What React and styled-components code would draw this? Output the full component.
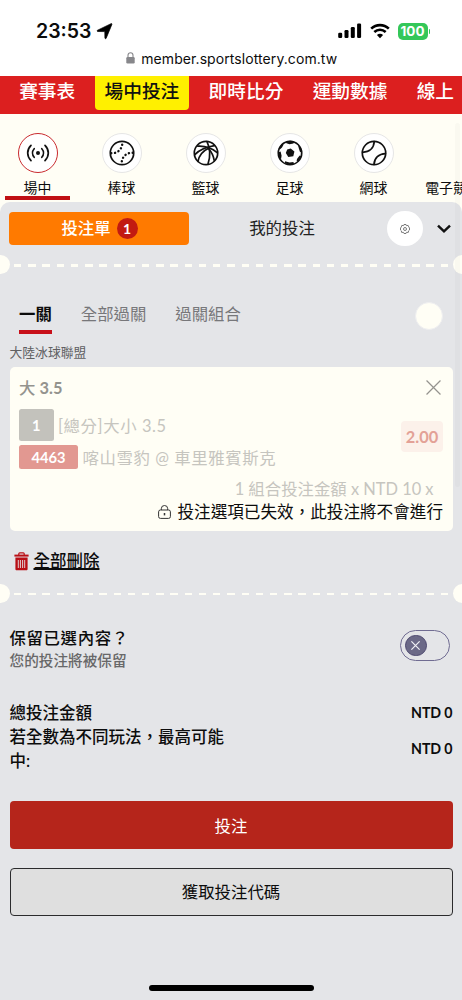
import React from 'react'
import styled, { createGlobalStyle } from 'styled-components'

const GlobalStyle = createGlobalStyle`
  * {
    box-sizing: border-box;
  }

  body {
    margin: 0;
    background-color: #fff;
    color: #0c0c0c;
    font-family: Lato, 'Noto Sans CJK TC', sans-serif;
    font-size: 16.4px;
  }

  button {
    padding: 0;
    border: none;
    background: none;
    color: inherit;
    font: inherit;
  }

  svg {
    display: block;
    flex-shrink: 0;
  }
`

const Screen = styled.div`
  position: relative;
  width: 462px;
  height: 1000px;
  overflow: hidden;
  background-color: #fffef5;
`

const BrowserBar = styled.header`
  height: 76px;
  padding-top: 20px;
  background-color: #fff;
  font-family: Inter, sans-serif;
`

const StatusRow = styled.div`
  display: flex;
  align-items: center;
  height: 22px;
  padding: 0 32px 0 36px;
`

const Time = styled.span`
  margin-right: 5px;
  font-size: 19.5px;
  font-weight: 600;
  letter-spacing: 0;
`

const StatusIcons = styled.div`
  display: flex;
  align-items: center;
  gap: 8px;
  margin-left: auto;
`

const BatteryBox = styled.div`
  display: flex;
  align-items: center;
  gap: 1px;
`

const Battery = styled.div`
  width: 30px;
  height: 17px;
  border-radius: 5px;
  background-color: #34c759;
  color: #fff;
  font-size: 13.5px;
  font-weight: 700;
  line-height: 17px;
  text-align: center;
`

const BatteryTip = styled.div`
  width: 1.5px;
  height: 5px;
  border-radius: 0 2px 2px 0;
  background-color: #34c759;
`

const UrlRow = styled.div`
  display: flex;
  justify-content: center;
  align-items: center;
  gap: 6.5px;
  height: 20px;
  margin-top: 6px;
  padding-left: 1px;
  font-size: 14px;
  letter-spacing: 0.08px;
`

const Nav = styled.nav`
  display: flex;
  gap: 9.3px;
  height: 38px;
  padding-left: 9.2px;
  overflow: hidden;
  background-color: #dc1f1f;
`

const NavItem = styled.div`
  flex-shrink: 0;
  height: 34px;
  padding: 0 10px;
  border-radius: 0 0 4px 4px;
  background-color: ${(props) => props.$active && '#fff000'};
  color: ${(props) => (props.$active ? '#111' : '#fff')};
  font-size: 18.7px;
  font-weight: 500;
  line-height: 31px;
  white-space: nowrap;
`

const Sports = styled.div`
  display: flex;
  gap: 19px;
  height: 88px;
  padding: 19px 0 0 5px;
  overflow: hidden;
`

const SportItem = styled.div`
  display: flex;
  flex-direction: column;
  flex-shrink: 0;
  align-items: center;
  width: 65px;
  height: 67px;
  border-bottom: ${(props) => props.$active && '4px solid #c01014'};
  font-size: 13.9px;
  white-space: nowrap;
`

const SportCircle = styled.div`
  display: flex;
  flex-shrink: 0;
  justify-content: center;
  align-items: center;
  width: 40px;
  height: 40px;
  border: 1px solid ${(props) => (props.$active ? '#c92a2e' : '#e6e6e6')};
  border-radius: 50%;
  background-color: ${(props) => !props.$empty && '#fff'};
  visibility: ${(props) => props.$empty && 'hidden'};
`

const SportLabel = styled.span`
  margin-top: 5px;
  margin-left: ${(props) => props.$shift && '-9px'};
  line-height: 20px;
`

const Panel = styled.main`
  height: 798px;
  border-radius: 10px 10px 0 0;
  background-color: #e4e5e8;
`

const SlipHeader = styled.div`
  display: flex;
  align-items: center;
  height: 53px;
  padding: 0 11px 0 9px;
`

const SlipButton = styled.button`
  display: flex;
  justify-content: center;
  align-items: center;
  gap: 6px;
  width: 180px;
  height: 33px;
  padding-left: 1px;
  border-radius: 4px;
  background-color: #ff7a00;
  color: #fff;
  line-height: 30px;
`

const SlipText = styled.span`
  margin-top: -2px;
  font-weight: 500;
`

const Count = styled.span`
  width: 21px;
  height: 21px;
  border-radius: 50%;
  background-color: #c21a11;
  font-size: 14px;
  font-weight: 700;
  line-height: 21px;
  text-align: center;
`

const MyBets = styled.button`
  width: 186px;
  margin-top: -3px;
  color: #222;
`

const GearButton = styled.button`
  display: flex;
  justify-content: center;
  align-items: center;
  width: 35.5px;
  height: 35.5px;
  margin: 0 14px 0 12px;
  border-radius: 50%;
  background-color: #fff;
`

const Perforation = styled.div`
  display: flex;
  justify-content: space-between;
  align-items: center;
  height: 19px;
  margin: 0 -9.5px;
`

const Notch = styled.div`
  width: 19px;
  height: 19px;
  border-radius: 50%;
  background-color: #fffef5;
`

const Dashes = styled.div`
  width: 435px;
  height: 2.5px;
  margin-top: 1.5px;
  background: repeating-linear-gradient(
    90deg,
    #fffef5 0 7.4px,
    transparent 7.4px 14.22px
  );
`

const Tabs = styled.div`
  display: flex;
  align-items: center;
  gap: 29px;
  height: 34px;
  margin-top: 24.5px;
  padding: 0 19px;
`

const Tab = styled.button`
  height: 36px;
  border-bottom: 4px solid ${(props) => (props.$active ? '#c8101a' : 'transparent')};
  color: ${(props) => (props.$active ? '#0c0c0c' : '#77777a')};
  font-size: 16.4px;
  font-weight: ${(props) => (props.$active ? 700 : 400)};
  line-height: 31px;
`

const RoundToggle = styled.div`
  width: 28px;
  height: 28px;
  margin-left: auto;
  border: 1px solid #eeeef0;
  border-radius: 50%;
  background-color: #fffef5;
`

const League = styled.div`
  height: 20px;
  margin: 10px 0 4px;
  padding-left: 9.5px;
  color: #606062;
  font-size: 12.8px;
  line-height: 19px;
`

const Card = styled.section`
  height: 164px;
  margin: 0 9.5px;
  padding: 9px 9.5px 0;
  border-radius: 5px;
  background-color: #fffef5;
`

const CardTitle = styled.div`
  display: flex;
  justify-content: space-between;
  align-items: center;
  height: 24px;
  padding-right: 2px;
  color: #94938e;
  font-weight: 500;
  line-height: 22px;

  b {
    font-weight: 700;
  }
`

const CardBody = styled.div`
  display: flex;
  justify-content: space-between;
  align-items: center;
  height: 60.5px;
  margin-top: 9px;
  color: #c6c5bf;
`

const CardLine = styled.div`
  display: flex;
  align-items: center;
  gap: 4.5px;
  height: ${(props) => props.$height};
  margin-bottom: ${(props) => props.$gap};
  letter-spacing: 0.6px;
`

const Tag = styled.span`
  display: flex;
  justify-content: center;
  align-items: center;
  width: ${(props) => props.$width};
  height: 100%;
  border-radius: 2.5px;
  background-color: ${(props) => props.$color};
  color: #fff;
  font-size: 14.7px;
  font-weight: 700;
  letter-spacing: 0;
`

const Odds = styled.div`
  width: 42px;
  height: 31px;
  margin-top: -4px;
  border-radius: 4px;
  background-color: #fcf1ea;
  color: #e3a196;
  font-weight: 700;
  line-height: 31px;
  text-align: center;
`

const Stake = styled.div`
  height: 24px;
  margin-top: 8px;
  padding-right: 9.5px;
  color: #c6c5bf;
  line-height: 24px;
  text-align: right;
`

const Invalid = styled.div`
  display: flex;
  justify-content: flex-end;
  align-items: center;
  gap: 6.5px;
  height: 24px;
  margin-top: -1px;
  font-size: 16.6px;
  line-height: 22px;
`

const InvalidText = styled.span`
  margin-top: -1px;
`

const ClearAll = styled.button`
  display: flex;
  align-items: center;
  gap: 5px;
  height: 24px;
  margin: 18.5px 0 10.5px 13.5px;
  font-size: 16.5px;
  font-weight: 500;
  line-height: 22px;
  text-decoration: underline;
  text-decoration-thickness: 1.5px;
  text-underline-offset: 1px;
`

const KeepRow = styled.div`
  display: flex;
  justify-content: space-between;
  align-items: flex-start;
  height: 46px;
  margin-top: 23.5px;
  padding: 0 12px 0 9.5px;
`

const KeepTitle = styled.div`
  height: 24.5px;
  font-weight: 500;
  letter-spacing: 0.65px;
  line-height: 24px;
`

const KeepHint = styled.div`
  height: 20px;
  color: #686869;
  font-size: 14.65px;
  font-weight: 500;
  line-height: 20px;
`

const Switch = styled.div`
  display: flex;
  align-items: center;
  width: 50px;
  height: 31px;
  margin-top: 4px;
  padding-left: 4px;
  border: 1px solid #706c92;
  border-radius: 16px;
`

const Knob = styled.div`
  display: flex;
  justify-content: center;
  align-items: center;
  width: 21.5px;
  height: 21.5px;
  border: 1px solid #4d486f;
  border-radius: 50%;
  background-color: #6b6987;
`

const Totals = styled.div`
  margin-top: 29px;
  padding: 0 9.5px;
`

const TotalRow = styled.div`
  display: flex;
  justify-content: space-between;
  align-items: center;
  font-size: 16.5px;
  font-weight: 500;
  line-height: 24px;
`

const TotalLabel = styled.span`
  width: 232px;
`

const Amount = styled.span`
  font-size: 14.2px;
  font-weight: 700;
  letter-spacing: -0.1px;
`

const Action = styled.button`
  display: block;
  width: 443px;
  height: 48px;
  margin: ${(props) => (props.$outline ? '18.5px' : '28px')} auto 0;
  padding-bottom: ${(props) => (props.$outline ? '2px' : '1px')};
  border: ${(props) => props.$outline && '1px solid #2b2b2d'};
  border-radius: 4px;
  background-color: ${(props) => (props.$outline ? '#dfdfdf' : '#b5251b')};
  color: ${(props) => !props.$outline && '#fff'};
`

const HomeIndicator = styled.div`
  position: absolute;
  bottom: 9px;
  left: 149px;
  width: 165px;
  height: 6.5px;
  border-radius: 4px;
  background-color: #000;
`

const ScrollThumb = styled.div`
  position: absolute;
  top: 123px;
  right: 2px;
  width: 5px;
  height: 364px;
  border-radius: 3px;
  background-color: rgba(60, 60, 60, 0.025);
`

const LocationIcon = () => (
  <svg width="17" height="17" viewBox="0 0 17 17">
    <path
      d="M15.9 1.4 10.2 15.2c-.3.8-1.3.6-1.3-.3L8.8 8.6 1.9 8.5c-.9 0-1.1-1-.3-1.3L15 .7c.7-.3 1.1.1.9.7Z"
      stroke="#000"
      strokeWidth="0.7"
    />
  </svg>
)

const SignalIcon = () => (
  <svg width="24" height="16" viewBox="0 0 24 16">
    <rect x="0.2" y="9.7" width="4" height="5.3" rx="1.2" />
    <rect x="6.5" y="7" width="4" height="8" rx="1.2" />
    <rect x="12.8" y="4" width="4" height="11" rx="1.2" />
    <rect x="19.1" y="0.5" width="4" height="14.5" rx="1.2" />
  </svg>
)

const WifiIcon = () => (
  <svg width="20" height="16" viewBox="0 0 20 16">
    <path d="M1.2 5.6c5-4.7 12.6-4.7 17.6 0" fill="none" stroke="#000" strokeWidth="2.6" />
    <path d="M4.3 9c3.3-3 8.1-3 11.4 0" fill="none" stroke="#000" strokeWidth="2.6" />
    <path d="M10 15.2 6.9 12c1.8-1.6 4.4-1.6 6.2 0Z" />
  </svg>
)

const UrlLockIcon = () => (
  <svg width="9" height="12" viewBox="0 0 9 12">
    <rect x="0.3" y="5" width="8.4" height="6.5" rx="1.2" fill="#87878b" />
    <path d="M2 5.5V3.2a2.5 2.5 0 0 1 5 0v2.3" fill="none" stroke="#87878b" strokeWidth="1.1" />
  </svg>
)

const SportIcon = ({ children }) => (
  <svg
    width="26"
    height="26"
    viewBox="0 0 26 26"
    fill="none"
    stroke="#111"
    strokeWidth="1.7"
    strokeLinecap="round"
  >
    {children}
  </svg>
)

const LiveIcon = () => (
  <SportIcon>
    <circle cx="13" cy="13" r="2" fill="#111" stroke="none" />
    <path d="M9.2 8.7c-2.2 2.5-2.2 6.1 0 8.6M16.8 8.7c2.2 2.5 2.2 6.1 0 8.6" />
    <path d="M6 5.4c-4.4 4.4-4.4 10.8 0 15.2M20 5.4c4.4 4.4 4.4 10.8 0 15.2" />
  </SportIcon>
)

const BaseballIcon = () => (
  <SportIcon>
    <circle cx="13" cy="13" r="11.7" />
    <path
      d="M13.3 1.8c.5 7-4.6 11.9-11.4 11.5M12.7 24.2c-.5-7 4.6-11.9 11.4-11.5"
      strokeWidth="2.4"
      strokeDasharray="0.1 3.7"
      strokeDashoffset="-2.8"
    />
  </SportIcon>
)

const BasketballIcon = () => (
  <SportIcon>
    <circle cx="13" cy="13" r="11.7" />
    <path d="M4.8 6.2c6.4-.4 13.6 1.6 19.4 6.4" />
    <path d="M15.6 8.2c-5.6 2.6-9.6 7.4-10.6 13.2" />
    <path d="M1.8 14.6c4-4.2 11-7.6 19.6-9" />
    <path d="M14 1.6c3.4 7 3.6 14.6 1 22.4" />
    <path d="M15.8 9c2.4 2.6 4.6 6.4 5.4 11.4" />
  </SportIcon>
)

const FootballIcon = () => (
  <SportIcon>
    <circle cx="13" cy="13" r="11.7" />
    <path
      d="M13.7 8.5 17.4 11.4 16.3 16.3 11.3 17 8.8 12.9 10.2 9.4Z"
      fill="#111"
      stroke="none"
    />
    <path
      d="M9 1.6c3-1 6-1 8.4.2l-1 1.6-3.8.9-3.2-1ZM1.6 8.4 5 3.6l1.6.9L5 7.6 2.8 9.4ZM1 12.4l2.6-1 1 4.4-.5 3-1.4 0C1.6 17 .9 14.6 1 12.4ZM8 21.2l4.6 1.2 3.8-.5.6 2c-3 1.2-6.4 1-9-.6ZM24.2 16.4l-3 5.2-1.7-1 .8-2.2 2.4-2.8ZM21 4.2l3.4 4.6.4 3.8-1.9-.8-1.2-3.8Z"
      fill="#111"
      stroke="none"
    />
  </SportIcon>
)

const TennisIcon = () => (
  <SportIcon>
    <circle cx="13" cy="13" r="11.7" />
    <path d="M13.2 1.6C12.9 7.7 8.7 12 1.6 12.3M24.4 13.6c-6.6.2-11.1 4.4-11.4 10.8" />
  </SportIcon>
)

const GearIcon = () => (
  <svg width="10" height="10" viewBox="0 0 20 20" fill="none" stroke="#6d6d6d" strokeWidth="1.8">
    <path d="M8 1h4l.8 2.3 3.4-.5 1.4 3.2L19 8v4l-1.8 1.6-.6 3.2-3.8-.1L12 19H8l-1-2.3-3.8.1-.5-3.2L1 12V8l1.6-2 1-3.2 3.6.5Z" />
    <circle cx="10" cy="10" r="3" />
  </svg>
)

const ChevronIcon = () => (
  <svg width="14" height="10" viewBox="0 0 14 10">
    <path d="m1 1.7 6 5.6 6-5.6" fill="none" stroke="#111" strokeWidth="2.5" />
  </svg>
)

const CrossIcon = ({ size, color, weight = 1 }) => (
  <svg width={size} height={size} viewBox="0 0 14 14">
    <path
      d="m.5.5 13 13M13.5.5l-13 13"
      stroke={color}
      strokeWidth={(14 / size) * weight}
      fill="none"
    />
  </svg>
)

const LockIcon = () => (
  <svg width="13" height="14" viewBox="0 0 13 14" fill="none" stroke="#333">
    <rect x="0.6" y="5" width="11.8" height="8.4" rx="1.8" />
    <path d="M3.3 5V3.7a3.2 3.2 0 0 1 6.4 0V5" />
    <path d="M6.5 8v2.4" strokeWidth="1.5" />
  </svg>
)

const TrashIcon = () => (
  <svg width="15" height="19" viewBox="0 0 15 19">
    <path d="M4.8 3V1.7c0-.6.3-.9.9-.9h3.6c.6 0 .9.3.9.9V3" fill="none" stroke="#b90f16" strokeWidth="1.2" />
    <path d="M.4 2.6h14.2v2H.4Z" fill="#b90f16" />
    <path d="M1.4 5.6h12.2V17c0 .8-.5 1.3-1.3 1.3H2.7c-.8 0-1.3-.5-1.3-1.3Z" fill="#b90f16" />
    <path d="M4.3 8v8M6.4 8v8M8.6 8v8M10.7 8v8" stroke="#e4e5e8" strokeWidth="0.9" />
  </svg>
)

const navItems = ['賽事表', '場中投注', '即時比分', '運動數據', '線上']

const sports = [
  { label: '場中', Icon: LiveIcon },
  { label: '棒球', Icon: BaseballIcon },
  { label: '籃球', Icon: BasketballIcon },
  { label: '足球', Icon: FootballIcon },
  { label: '網球', Icon: TennisIcon },
  { label: '電子競技' },
]

const Divider = () => (
  <Perforation>
    <Notch />
    <Dashes />
    <Notch />
  </Perforation>
)

const App = () => {
  return (
    <Screen>
      <GlobalStyle />
      <BrowserBar>
        <StatusRow>
          <Time>23:53</Time>
          <LocationIcon />
          <StatusIcons>
            <SignalIcon />
            <WifiIcon />
            <BatteryBox>
              <Battery>100</Battery>
              <BatteryTip />
            </BatteryBox>
          </StatusIcons>
        </StatusRow>
        <UrlRow>
          <UrlLockIcon />
          member.sportslottery.com.tw
        </UrlRow>
      </BrowserBar>

      <Nav>
        {navItems.map((item) => (
          <NavItem key={item} $active={item === '場中投注'}>
            {item}
          </NavItem>
        ))}
      </Nav>

      <Sports>
        {sports.map(({ label, Icon }, i) => (
          <SportItem key={label} $active={i === 0}>
            <SportCircle $active={i === 0} $empty={!Icon}>
              {Icon && <Icon />}
            </SportCircle>
            <SportLabel $shift={!Icon}>{label}</SportLabel>
          </SportItem>
        ))}
      </Sports>

      <Panel>
        <SlipHeader>
          <SlipButton>
            <SlipText>投注單</SlipText>
            <Count>1</Count>
          </SlipButton>
          <MyBets>我的投注</MyBets>
          <GearButton>
            <GearIcon />
          </GearButton>
          <ChevronIcon />
        </SlipHeader>

        <Divider />

        <Tabs>
          <Tab $active>一關</Tab>
          <Tab>全部過關</Tab>
          <Tab>過關組合</Tab>
          <RoundToggle />
        </Tabs>

        <League>大陸冰球聯盟</League>

        <Card>
          <CardTitle>
            <span>
              大 <b>3.5</b>
            </span>
            <CrossIcon size={15} color="#94938e" weight={1.2} />
          </CardTitle>
          <CardBody>
            <div>
              <CardLine $height="32.5px" $gap="4px">
                <Tag $width="34.5px" $color="#c3c2bc">
                  1
                </Tag>
                [總分]大小 3.5
              </CardLine>
              <CardLine $height="24px">
                <Tag $width="59px" $color="#e29891">
                  4463
                </Tag>
                喀山雪豹 @ 車里雅賓斯克
              </CardLine>
            </div>
            <Odds>2.00</Odds>
          </CardBody>
          <Stake>1 組合投注金額 x NTD 10 x</Stake>
          <Invalid>
            <LockIcon />
            <InvalidText>投注選項已失效，此投注將不會進行</InvalidText>
          </Invalid>
        </Card>

        <ClearAll>
          <TrashIcon />
          全部刪除
        </ClearAll>

        <Divider />

        <KeepRow>
          <div>
            <KeepTitle>保留已選內容？</KeepTitle>
            <KeepHint>您的投注將被保留</KeepHint>
          </div>
          <Switch>
            <Knob>
              <CrossIcon size={9} color="#f0f0f5" weight={1.2} />
            </Knob>
          </Switch>
        </KeepRow>

        <Totals>
          <TotalRow>
            <TotalLabel>總投注金額</TotalLabel>
            <Amount>NTD 0</Amount>
          </TotalRow>
          <TotalRow>
            <TotalLabel>若全數為不同玩法，最高可能中:</TotalLabel>
            <Amount>NTD 0</Amount>
          </TotalRow>
        </Totals>

        <Action>投注</Action>
        <Action $outline>獲取投注代碼</Action>
      </Panel>

      <ScrollThumb />
      <HomeIndicator />
    </Screen>
  )
}

export default App
